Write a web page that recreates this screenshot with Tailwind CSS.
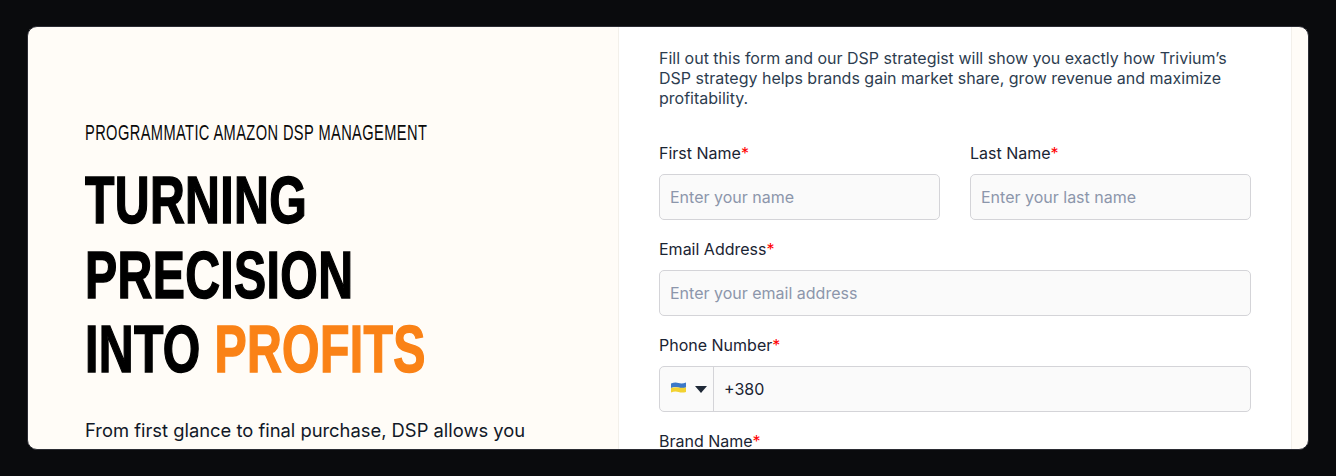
<!DOCTYPE html>
<html lang="en">
<head>
  <meta charset="UTF-8" />
  <title>Programmatic Amazon DSP Management</title>
  <script src="https://cdn.jsdelivr.net/npm/@tailwindcss/browser@4"></script>
</head>
<body class="bg-[#0a0b0d] h-[476px] overflow-hidden font-['Inter',sans-serif]">

  <div class="mx-[27px] mt-[26px] h-[424px] border border-[#2b2c33] rounded-[10px] overflow-hidden bg-[#fffcf7] flex">

    <!-- Left side -->
    <div class="w-[590px] shrink-0 pl-[57px] pt-[93px]">
      <p class="font-['Liberation_Sans',sans-serif] text-[22px] leading-[26px] tracking-[0.6px] text-[#0a0a0a] origin-left scale-x-[0.665] whitespace-nowrap">PROGRAMMATIC AMAZON DSP MANAGEMENT</p>
      <h1 class="mt-[17px] font-['Liberation_Sans',sans-serif] font-bold text-[66px] leading-[74.5px] tracking-[0.5px] text-black origin-left scale-x-[0.73] whitespace-nowrap [-webkit-text-stroke:1.5px_currentColor]">
        TURNING<br />PRECISION<br />INTO <span class="text-[#fa8216]">PROFITS</span>
      </h1>
      <p class="mt-[29px] text-[18.36px] leading-[28px] text-[#111827] whitespace-nowrap">From first glance to final purchase, DSP allows you</p>
    </div>

    <!-- Form side -->
    <div class="w-[674px] shrink-0 bg-white border-x border-[#f3f0ea] pl-[40px] pr-[40px] pt-[21px]">
      <p class="text-[16px] leading-[20px] text-[#2d3d50] w-[580px]">Fill out this form and our DSP strategist will show you exactly how Trivium’s DSP strategy helps brands gain market share, grow revenue and maximize profitability.</p>

      <form class="mt-[33px] w-[592px]">
        <div class="grid grid-cols-2 gap-x-[30px]">
          <div>
            <label class="block text-[16px] leading-[24px] text-[#1a2433]">First Name<span class="text-[#f00]">*</span></label>
            <input type="text" placeholder="Enter your name" class="mt-[9px] w-full h-[46px] px-[10px] text-[16px] bg-[#fafafa] border border-[#d4d4d8] rounded-[5px] placeholder:text-[#8c96ab]" />
          </div>
          <div>
            <label class="block text-[16px] leading-[24px] text-[#1a2433]">Last Name<span class="text-[#f00]">*</span></label>
            <input type="text" placeholder="Enter your last name" class="mt-[9px] w-full h-[46px] px-[10px] text-[16px] bg-[#fafafa] border border-[#d4d4d8] rounded-[5px] placeholder:text-[#8c96ab]" />
          </div>
        </div>

        <div class="mt-[17px]">
          <label class="block text-[16px] leading-[24px] text-[#1a2433]">Email Address<span class="text-[#f00]">*</span></label>
          <input type="text" placeholder="Enter your email address" class="mt-[9px] w-full h-[46px] px-[10px] text-[16px] bg-[#fafafa] border border-[#d4d4d8] rounded-[5px] placeholder:text-[#8c96ab]" />
        </div>

        <div class="mt-[17px]">
          <label class="block text-[16px] leading-[24px] text-[#1a2433]">Phone Number<span class="text-[#f00]">*</span></label>
          <div class="mt-[9px] flex h-[46px] bg-[#fafafa] border border-[#d4d4d8] rounded-[5px]">
            <div class="w-[54px] shrink-0 flex items-center pl-[11px] border-r border-[#d4d4d8]">
              <svg class="-mt-[3px]" width="15" height="11" viewBox="0 0 15 11">
                <path d="M0 1.5 Q4 0 7.5 1 T15 0.5 V5.5 Q11 6.5 7.5 5.5 T0 6 Z" fill="#3b78c9" />
                <path d="M0 6 Q4 4.8 7.5 5.5 T15 5.5 V10 Q11 11 7.5 10 T0 10.5 Z" fill="#f2d231" />
              </svg>
              <svg class="ml-[9px]" width="12" height="7" viewBox="0 0 12 7"><path d="M0 0 H12 L6 7 Z" fill="#1f2937" /></svg>
            </div>
            <input type="text" value="+380" class="flex-1 min-w-0 px-[10px] text-[16px] text-[#1a2433]" />
          </div>
        </div>

        <div class="mt-[17px]">
          <label class="block text-[16px] leading-[24px] text-[#1a2433]">Brand Name<span class="text-[#f00]">*</span></label>
        </div>
      </form>
    </div>
  </div>

</body>
</html>
